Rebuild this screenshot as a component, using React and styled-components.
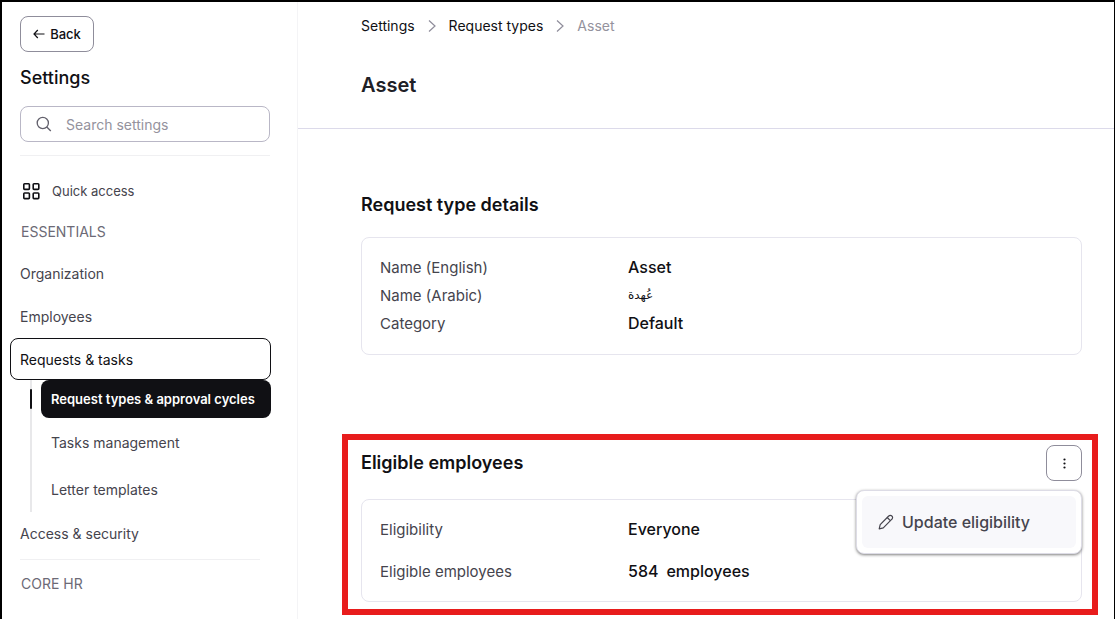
import React from 'react';
import styled, { createGlobalStyle } from 'styled-components';

const GlobalStyle = createGlobalStyle`
    * {
        box-sizing: border-box;
    }

    body {
        margin: 0;
        background-color: #fff;
        color: #101014;
        font-family: 'Inter', 'Liberation Sans', sans-serif;
        font-size: 14px;
    }

    h1, h2, ul, dl, dd {
        margin: 0;
        padding: 0;
    }

    ul {
        list-style: none;
    }

    a {
        color: inherit;
        text-decoration: none;
    }

    button, input {
        font: inherit;
    }

    svg {
        flex-shrink: 0;
        fill: none;
        stroke: currentColor;
    }
`;

const Page = styled.div`
    display: flex;
    min-height: 100vh;
    border: 2px solid #000;
    border-right-width: 1px;
`;

const Sidebar = styled.aside`
    flex: 0 0 296px;
    min-width: 0;
    padding: 14px 27px 16px 18px;
    border-right: 1px solid #f4f4f6;
`;

const BackButton = styled.button`
    display: flex;
    align-items: center;
    justify-content: center;
    gap: 5px;
    width: 74px;
    height: 36px;
    padding: 0;
    border: 1px solid #8f8d9b;
    border-radius: 8px;
    background-color: #fff;
    color: #101014;
    font-size: 13px;
    font-weight: 500;
`;

const SidebarTitle = styled.h2`
    margin-top: 14px;
    font-size: 18px;
    font-weight: 500;
    line-height: 24px;
`;

const SearchBox = styled.label`
    display: flex;
    align-items: center;
    gap: 14px;
    height: 36px;
    margin-top: 16px;
    padding: 0 15px;
    border: 1px solid #b9b7c6;
    border-radius: 8px;
    color: #62606c;

    input {
        flex: 1;
        width: 100%;
        min-width: 0;
        padding: 0;
        border: 0;
        outline: 0;
        background: none;
    }

    input::placeholder {
        color: #94929d;
        opacity: 1;
    }
`;

const Divider = styled.hr`
    height: 1px;
    margin: ${({ $short }) => ($short ? '4px 10px 0 0' : '13px 0 0')};
    border: 0;
    background-color: #f0f0f2;
`;

const QuickAccess = styled.a`
    display: flex;
    align-items: center;
    gap: 12px;
    height: 38px;
    margin-top: 16px;
    padding-left: 3px;
    color: #45444d;
    font-size: 13px;

    svg {
        color: #101014;
    }
`;

const GroupLabel = styled.div`
    margin: ${({ $top }) => $top}px 0 10px 1px;
    color: #6c6a76;
    line-height: 20px;
`;

const NavList = styled.ul`
    display: flex;
    flex-direction: column;
`;

const NavLink = styled.a`
    display: flex;
    align-items: center;
    height: 42px;
    margin: 0 -1px 1px -10px;
    padding-left: 9px;
    border: 1px solid transparent;
    border-radius: 8px;
    color: #45444d;

    &[aria-current] {
        margin-bottom: 0;
        border-color: #101014;
        color: #101014;
    }
`;

const SubList = styled.ul`
    display: flex;
    flex-direction: column;
    gap: 2px;
    margin: 0 -1px 0 10px;
    padding-left: 9px;
    border-left: 2px solid #e8e8ea;
`;

const SubItem = styled.li`
    position: relative;

    &[data-active]::before {
        content: '';
        position: absolute;
        top: 9px;
        left: -11px;
        width: 2px;
        height: 20px;
        border-radius: 1px;
        background-color: #101014;
    }
`;

const SubLink = styled.a`
    display: flex;
    align-items: center;
    height: ${({ $active }) => ($active ? 38 : 45)}px;
    padding-left: 10px;
    border-radius: 8px;
    background-color: ${({ $active }) => ($active ? '#101014' : 'transparent')};
    color: ${({ $active }) => ($active ? '#fff' : '#45444d')};
    font-size: ${({ $active }) => ($active ? 13 : 14)}px;
    font-weight: ${({ $active }) => ($active ? 600 : 400)};
    white-space: nowrap;
`;

const Main = styled.main`
    flex: 1;
    min-width: 0;
`;

const PageHeader = styled.header`
    height: 127px;
    padding: 14px 32px 0 63px;
    border-bottom: 1px solid #dcdaea;
`;

const Breadcrumbs = styled.nav`
    display: flex;
    align-items: center;
    gap: 13px;
    line-height: 20px;

    svg {
        color: #8f8d9b;
    }

    span {
        color: #94929d;
    }
`;

const PageTitle = styled.h1`
    margin-top: 35px;
    color: #202026;
    font-size: 20px;
    font-weight: 600;
    line-height: 28px;
`;

const Content = styled.div`
    display: flex;
    flex-direction: column;
    gap: 66px;
    padding: 47px 16px 2px 44px;
`;

const Section = styled.section`
    padding: 5px 10px 7px 13px;
    border: 6px solid ${({ $highlight }) => ($highlight ? '#e81c1c' : 'transparent')};
`;

const SectionHeader = styled.div`
    position: relative;
    display: flex;
    align-items: center;
    justify-content: space-between;
    min-height: 36px;

    h2 {
        font-size: 18px;
        font-weight: 600;
        line-height: 24px;
    }
`;

const MoreButton = styled.button`
    display: flex;
    align-items: center;
    justify-content: center;
    width: 36px;
    height: 36px;
    padding: 0;
    border: 1px solid #8f8d9b;
    border-radius: 8px;
    background-color: #fff;
    color: #101014;

    svg {
        fill: currentColor;
        stroke: none;
    }
`;

const Menu = styled.div`
    position: absolute;
    top: 45px;
    right: 0;
    z-index: 1;
    width: 226px;
    padding: 5px;
    border: 1px solid #dddce6;
    border-radius: 8px;
    background-color: #fff;
    box-shadow: 0 1px 3px rgba(0, 0, 0, 0.5);
`;

const MenuItem = styled.button`
    display: flex;
    align-items: center;
    gap: 8px;
    width: 100%;
    height: 52px;
    padding: 0 0 0 16px;
    border: 0;
    border-radius: 6px;
    background-color: #f8f8fb;
    color: #45444d;
    font-size: 16px;
    font-weight: 500;
`;

const Card = styled.dl`
    margin-top: ${({ $roomy }) => ($roomy ? 18 : 14)}px;
    padding: ${({ $roomy }) => ($roomy ? '8px 18px 9px' : '15px 18px 17px')};
    border: 1px solid #e6e5ee;
    border-radius: 8px;
    font-size: 15px;
`;

const Row = styled.div`
    display: grid;
    grid-template-columns: 248px 1fr;
    align-items: center;
    height: ${({ $roomy }) => ($roomy ? 42 : 28)}px;

    dt {
        color: #45444d;
    }

    dd {
        display: flex;
        gap: 8px;
        font-size: 16px;
        font-weight: 500;
    }
`;

const Arabic = styled.span`
    font-family: 'DejaVu Sans', sans-serif;
    font-size: 12px;
    font-weight: 400;
`;

const ArrowLeft = () => (
    <svg width="12" height="10" viewBox="0 0 12 10" strokeWidth="1.2">
        <path d="M11.5 5H1M4.8 1 1 5l3.8 4" />
    </svg>
);

const SearchIcon = () => (
    <svg width="16" height="16" viewBox="0 0 16 16" strokeWidth="1.3">
        <circle cx="6.8" cy="7" r="5.6" />
        <path d="m10.8 11 4 4" />
    </svg>
);

const GridIcon = () => (
    <svg width="17" height="17" viewBox="0 0 17 17" strokeWidth="1.6">
        <rect x="0.8" y="0.8" width="5.6" height="5.6" rx="0.8" />
        <rect x="10.2" y="0.8" width="5.6" height="5.6" rx="0.8" />
        <rect x="0.8" y="10" width="5.6" height="5.6" rx="0.8" />
        <rect x="10.2" y="10" width="5.6" height="5.6" rx="0.8" />
    </svg>
);

const Chevron = () => (
    <svg width="8" height="12" viewBox="0 0 8 12" strokeWidth="1.2">
        <path d="m1 .5 6 5.5-6 5.5" />
    </svg>
);

const DotsIcon = () => (
    <svg width="3" height="11" viewBox="0 0 3 11">
        <circle cx="1.5" cy="1.5" r="1.1" />
        <circle cx="1.5" cy="5.5" r="1.1" />
        <circle cx="1.5" cy="9.5" r="1.1" />
    </svg>
);

const PencilIcon = () => (
    <svg width="16" height="16" viewBox="0 0 16 16" strokeWidth="1.2" strokeLinejoin="round">
        <path d="M1.2 14.8 2.2 10.6 10.7 2a2.2 2.2 0 0 1 3.2 0 2.2 2.2 0 0 1 0 3.2L5.3 13.8Z" />
        <path d="m9.2 3.5 3.2 3.2" />
    </svg>
);

const Details = ({ rows, roomy }) => (
    <Card $roomy={roomy}>
        {rows.map(([label, value]) => (
            <Row key={label} $roomy={roomy}>
                <dt>{label}</dt>
                <dd>{value}</dd>
            </Row>
        ))}
    </Card>
);

const typeDetails = [
    ['Name (English)', 'Asset'],
    ['Name (Arabic)', <Arabic lang="ar" dir="rtl">عُهدة</Arabic>],
    ['Category', 'Default'],
];

const eligibility = [
    ['Eligibility', 'Everyone'],
    ['Eligible employees', <><span>584</span><span>employees</span></>],
];

const App = () => {
    return (
        <>
            <GlobalStyle />
            <Page>
                <Sidebar>
                    <BackButton type="button">
                        <ArrowLeft />
                        Back
                    </BackButton>
                    <SidebarTitle>Settings</SidebarTitle>
                    <SearchBox>
                        <SearchIcon />
                        <input
                            type="text"
                            aria-label="Search settings"
                            placeholder="Search settings"
                        />
                    </SearchBox>
                    <Divider />
                    <QuickAccess href="#quick-access">
                        <GridIcon />
                        Quick access
                    </QuickAccess>
                    <GroupLabel $top={12}>ESSENTIALS</GroupLabel>
                    <NavList>
                        <li>
                            <NavLink href="#organization">Organization</NavLink>
                        </li>
                        <li>
                            <NavLink href="#employees">Employees</NavLink>
                        </li>
                        <li>
                            <NavLink href="#requests" aria-current="true">
                                Requests &amp; tasks
                            </NavLink>
                            <SubList>
                                <SubItem data-active>
                                    <SubLink href="#request-types" $active>
                                        Request types &amp; approval cycles
                                    </SubLink>
                                </SubItem>
                                <SubItem>
                                    <SubLink href="#tasks">Tasks management</SubLink>
                                </SubItem>
                                <SubItem>
                                    <SubLink href="#letters">Letter templates</SubLink>
                                </SubItem>
                            </SubList>
                        </li>
                        <li>
                            <NavLink href="#access">Access &amp; security</NavLink>
                        </li>
                    </NavList>
                    <Divider $short />
                    <GroupLabel $top={14}>CORE HR</GroupLabel>
                </Sidebar>
                <Main>
                    <PageHeader>
                        <Breadcrumbs aria-label="Breadcrumb">
                            <a href="#settings">Settings</a>
                            <Chevron />
                            <a href="#request-types">Request types</a>
                            <Chevron />
                            <span>Asset</span>
                        </Breadcrumbs>
                        <PageTitle>Asset</PageTitle>
                    </PageHeader>
                    <Content>
                        <Section>
                            <SectionHeader>
                                <h2>Request type details</h2>
                            </SectionHeader>
                            <Details rows={typeDetails} />
                        </Section>
                        <Section $highlight>
                            <SectionHeader>
                                <h2>Eligible employees</h2>
                                <MoreButton type="button" aria-label="More options">
                                    <DotsIcon />
                                </MoreButton>
                                <Menu>
                                    <MenuItem type="button">
                                        <PencilIcon />
                                        Update eligibility
                                    </MenuItem>
                                </Menu>
                            </SectionHeader>
                            <Details rows={eligibility} roomy />
                        </Section>
                    </Content>
                </Main>
            </Page>
        </>
    );
};

export default App;
